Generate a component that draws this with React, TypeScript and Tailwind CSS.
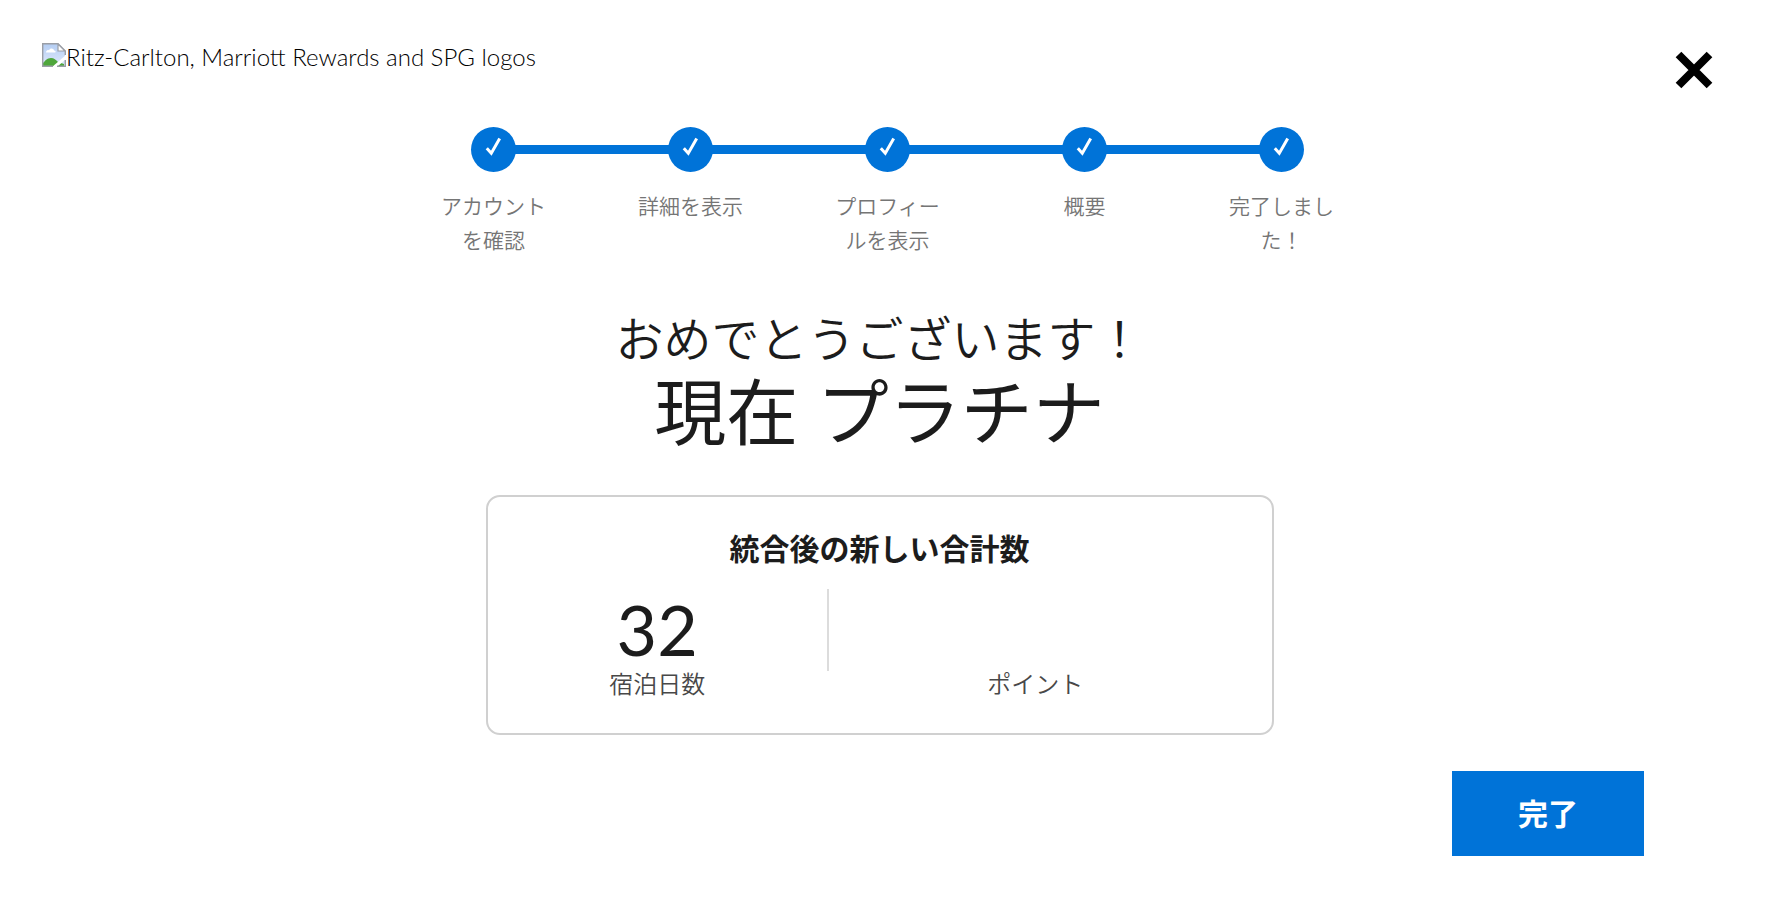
const steps = [
  "アカウントを確認",
  "詳細を表示",
  "プロフィールを表示",
  "概要",
  "完了しました！",
];

function BrokenImageIcon() {
  return (
    <svg width="24" height="24" viewBox="0 0 24 24" aria-hidden="true">
      <defs>
        <linearGradient id="sky" x1="0" y1="0" x2="0" y2="1">
          <stop offset="0" stopColor="#b4cdf3" />
          <stop offset="1" stopColor="#dfe9fb" />
        </linearGradient>
      </defs>
      <path d="M1 1H16L23 8V23H1Z" fill="url(#sky)" />
      <path d="M4 9.5c0-2 2-3 3-2 1-3 5-2 5 0 2 0 2 2 1 2Z" fill="#fff" />
      <path d="M1 23V20C3 18 5 15 9 15C12 15 14 17 16 19L22 21V23Z" fill="#4ea63b" />
      <path d="M10 24L24 12V16L15 24Z" fill="#fff" />
      <path d="M11 23.3H0.7V0.7H16L23.3 8V12M15 23.3H23.3V17" fill="none" stroke="#9a9ea6" strokeWidth="1.4" />
      <path d="M16 1V8H23Z" fill="#fff" stroke="#9a9ea6" strokeWidth="1.2" />
    </svg>
  );
}

function Step({ label, first, last }: { label: string; first: boolean; last: boolean }) {
  return (
    <li className="flex flex-col items-center">
      <div className="flex w-full items-center">
        <span className={first ? "h-[9px] flex-1" : "h-[9px] flex-1 bg-[#0073d8]"} />
        <span className="-mx-px flex size-[45px] items-center justify-center rounded-full bg-[#0073d8]">
          <svg width="45" height="45" viewBox="0 0 45 45" aria-hidden="true">
            <path d="M15.8 21.3L20.3 26.3L28.7 11.6" fill="none" stroke="#fff" strokeWidth="3" />
          </svg>
        </span>
        <span className={last ? "h-[9px] flex-1" : "h-[9px] flex-1 bg-[#0073d8]"} />
      </div>
      <span className="mt-[17px] w-[114px] text-center text-[21px] leading-[34px] text-[#757575]">
        {label}
      </span>
    </li>
  );
}

function Total({ value, label }: { value: string; label: string }) {
  return (
    <div className="flex flex-col items-center">
      <div className="h-20 text-[70px] leading-[80px] font-normal">{value}</div>
      <div className="text-[24px] leading-[30px] text-[#484848]">{label}</div>
    </div>
  );
}

export default function App() {
  return (
    <div
      lang="ja"
      className="min-h-screen bg-white pt-[43px] pb-[46px] font-['Lato','Noto_Sans_CJK_JP',sans-serif] font-[350] text-[#1c1c1c]"
    >
      <header className="flex items-start justify-between pr-[58px] pl-[42px]">
        <div className="flex items-start text-[24px] leading-7">
          <BrokenImageIcon />
          <span className="font-light text-black">Ritz-Carlton, Marriott Rewards and SPG logos</span>
        </div>
        <button type="button" aria-label="閉じる" className="mt-2 cursor-pointer">
          <svg width="38" height="38" viewBox="0 0 38 38" aria-hidden="true">
            <path d="M3.5 3.5L34.5 34.5M34.5 3.5L3.5 34.5" stroke="#000" strokeWidth="8" />
          </svg>
        </button>
      </header>

      <main className="pr-3">
        <ol className="ml-4 grid grid-cols-[repeat(5,197px)] justify-center pt-[38px]">
          {steps.map((label, i) => (
            <Step key={label} label={label} first={i === 0} last={i === steps.length - 1} />
          ))}
        </ol>

        <h1 className="mt-[46px] text-center">
          <span className="block text-[48px] leading-[72px]">おめでとうございます！</span>
          <span className="block text-[72px] leading-[72px] font-normal">現在 プラチナ</span>
        </h1>

        <section className="mx-auto mt-12 w-full max-w-[788px] rounded-[14px] border-2 border-[#d0d0d0] pt-[29px] pb-[34px]">
          <h2 className="text-center text-[30px] leading-[44px] font-bold">統合後の新しい合計数</h2>
          <div className="mt-[19px] flex pr-[30px]">
            <div className="w-[45%]">
              <Total value="32" label="宿泊日数" />
            </div>
            <div className="h-[82px] w-0.5 bg-[#dcdcdc]" />
            <div className="flex-1">
              <Total value="" label="ポイント" />
            </div>
          </div>
        </section>
      </main>

      <footer className="mt-[36px] flex justify-end pr-[127px]">
        <button
          type="button"
          className="cursor-pointer bg-[#0073d8] px-[66px] py-[20px] text-[30px] leading-[45px] font-bold text-white"
        >
          完了
        </button>
      </footer>
    </div>
  );
}
